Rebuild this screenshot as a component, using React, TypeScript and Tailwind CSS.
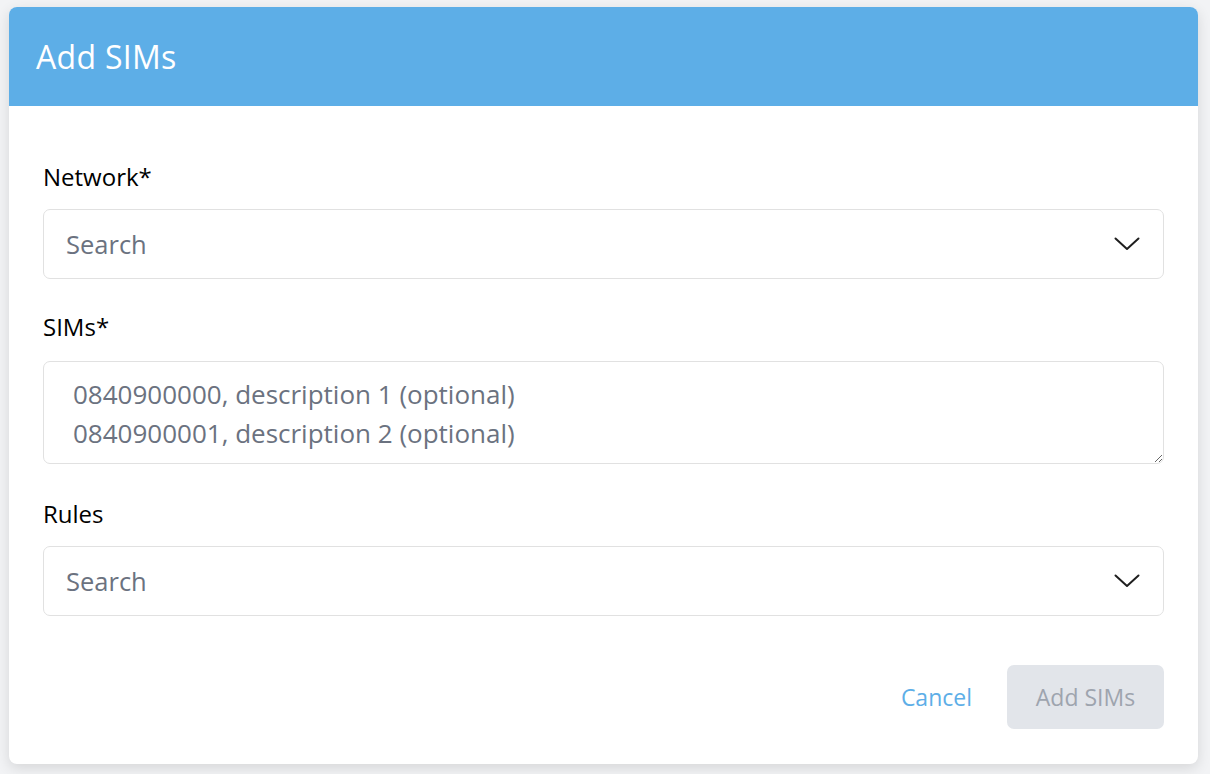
import React from "react";

const font = { fontFamily: '"Open Sans", "Lato", sans-serif' };

function Chevron() {
  return (
    <svg width="26" height="14" viewBox="0 0 26 14" fill="none" className="shrink-0">
      <path d="M1.5 1.5 L13 12 L24.5 1.5" stroke="#1f1f1f" strokeWidth="2" strokeLinecap="round" strokeLinejoin="round" />
    </svg>
  );
}

function SelectField({ label }: { label: string }) {
  return (
    <div className="flex flex-col">
      <label className="text-[24px] leading-[30px] text-black mb-[17px]">{label}</label>
      <div className="h-[70px] rounded-[7px] border border-[#e1e1e1] bg-white flex items-center justify-between pl-[22px] pr-[23px]">
        <span className="text-[25.5px] text-[#6b7280]">Search</span>
        <Chevron />
      </div>
    </div>
  );
}

export default function App() {
  return (
    <div className="min-h-screen w-full bg-[#f2f3f5] pt-[7px] pl-[9px] pr-[12px]" style={font}>
      <div className="w-[1189px] rounded-[8px] bg-white overflow-hidden shadow-[0_4px_14px_rgba(0,0,0,0.12)]">
        {/* header */}
        <div className="h-[99px] bg-[#5daee7] flex items-center px-[27px]">
          <h1 className="text-[32px] tracking-[0.3px] text-white font-medium">Add SIMs</h1>
        </div>

        {/* body */}
        <div className="px-[34px] pt-[56px] pb-[35px] flex flex-col">
          <SelectField label="Network*" />

          <div className="flex flex-col mt-[33px]">
            <label className="text-[24px] leading-[30px] text-black mb-[19px]">SIMs*</label>
            <textarea
              className="h-[103px] rounded-[7px] border border-[#e1e1e1] px-[29px] pt-[13px] text-[26px] leading-[39px] text-[#6b7280] placeholder:text-[#6b7280] outline-none resize-y"
              placeholder={"0840900000, description 1 (optional)\n0840900001, description 2 (optional)"}
            />
          </div>

          <div className="mt-[35px]">
            <SelectField label="Rules" />
          </div>

          <div className="flex items-center justify-end mt-[49px] gap-[35px]">
            <button className="text-[23px] text-[#5daee7]">Cancel</button>
            <button className="w-[157px] h-[64px] rounded-[7px] bg-[#e2e5ea] text-[23px] text-[#9ea4ae]">Add SIMs</button>
          </div>
        </div>
      </div>
    </div>
  );
}
